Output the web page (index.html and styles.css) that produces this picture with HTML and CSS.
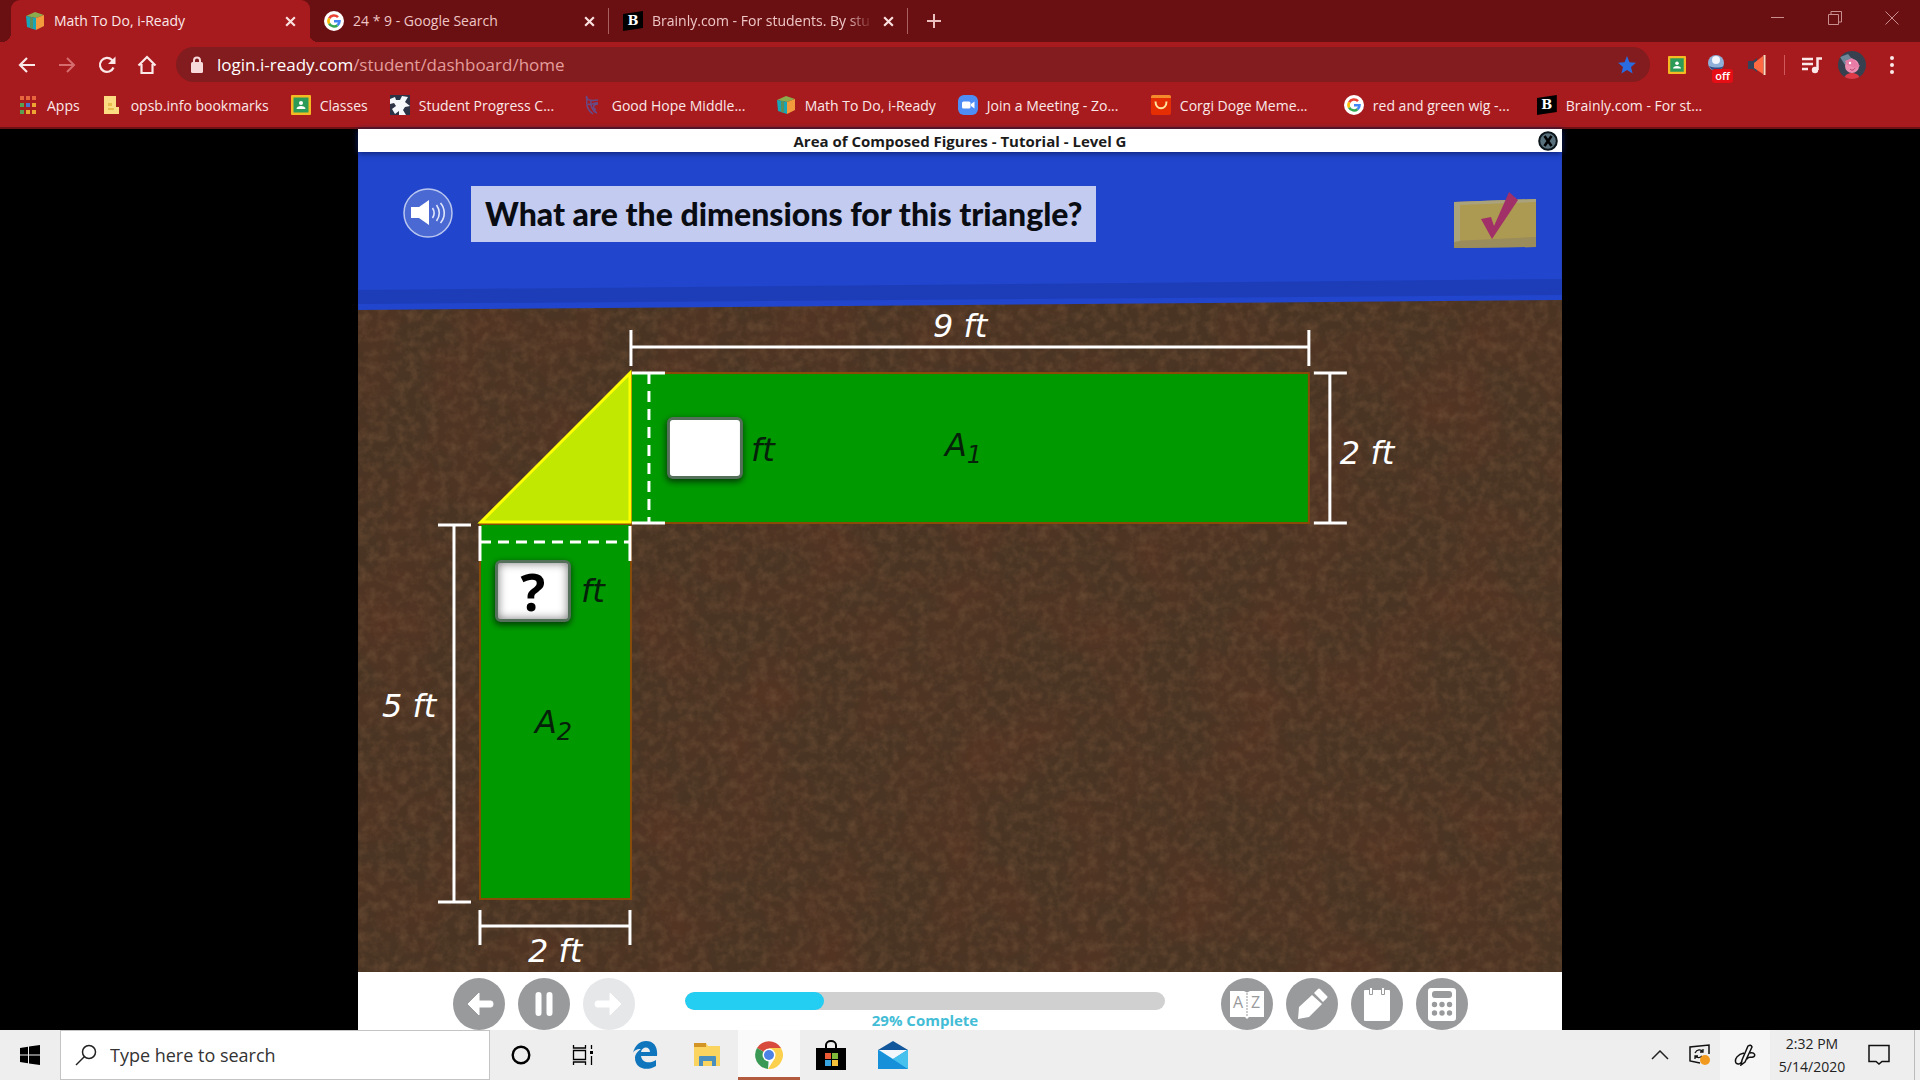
FILE: index.html
```html
<!DOCTYPE html>
<html lang="en">
<head>
<meta charset="utf-8">
<title>Math To Do, i-Ready</title>
<link rel="stylesheet" href="styles.css">
</head>
<body>
<svg class="defs" aria-hidden="true">
  <symbol id="cube" viewBox="0 0 20 20"><path d="M1 5 10 1l9 3-8 3z" fill="#8bab4c"/><path d="M1 5l10 2v12L2 16z" fill="#18a5b5"/><path d="M11 7l8-3v11l-8 4z" fill="#f39b3c"/><path d="M5 6l3 .6v11L5 16.900z" fill="#5b8f5c"/></symbol>
  <symbol id="google" viewBox="0 0 20 20"><circle cx="10" cy="10" r="10" fill="#fff"/><g fill="none" stroke-width="2.600"><path d="M5.200 7.400A5.500 5.500 0 0 1 14 6.200" stroke="#ea4335"/><path d="M5.200 7.300a5.500 5.500 0 0 0 0 5.400" stroke="#fbbc05"/><path d="M5.200 12.600A5.500 5.500 0 0 0 13.500 14.200" stroke="#34a853"/><path d="M10 10.200h5.500a5.500 5.500 0 0 1-2 4" stroke="#4285f4"/></g></symbol>
  <symbol id="close" viewBox="0 0 12 12"><path d="M2 2l8 8M10 2l-8 8" stroke="currentColor" stroke-width="2" fill="none"/></symbol>
  <symbol id="classroom" viewBox="0 0 20 20"><rect width="20" height="20" rx="1" fill="#f5b921"/><rect x="2.500" y="2.500" width="15" height="15" fill="#2c9b58"/><circle cx="10" cy="8" r="2" fill="#fff"/><path d="M5.500 14c0-4 9-4 9 0z" fill="#fff"/></symbol>
</svg>

<header class="browser">
  <div class="tabs">
    <a class="tab tab-active" href="#"><svg class="fav"><use href="#cube"/></svg><span class="tab-title">Math To Do, i-Ready</span><svg class="x"><use href="#close"/></svg></a>
    <a class="tab" href="#"><svg class="fav"><use href="#google"/></svg><span class="tab-title">24 * 9 - Google Search</span><svg class="x"><use href="#close"/></svg></a>
    <a class="tab" href="#"><span class="fav brainly">B</span><span class="tab-title tab-fade">Brainly.com - For students. By stu</span><svg class="x"><use href="#close"/></svg></a>
    <button class="new-tab" aria-label="New tab"><svg width="16" height="16" viewBox="0 0 16 16"><path d="M8 1v14M1 8h14" stroke="currentColor" stroke-width="2"/></svg></button>
    <div class="window-controls">
      <button aria-label="Minimize"><svg width="14" height="14" viewBox="0 0 14 14"><path d="M0 6.500h13" stroke="currentColor"/></svg></button>
      <button aria-label="Restore"><svg width="14" height="14" viewBox="0 0 14 14"><path d="M.5 3.500h10v10H.5zM3 3V.5h10.500V11H11" fill="none" stroke="currentColor"/></svg></button>
      <button aria-label="Close window"><svg width="14" height="14" viewBox="0 0 14 14"><path d="M.5.5l13 13M13.500.5l-13 13" stroke="currentColor"/></svg></button>
    </div>
  </div>
  <div class="toolbar">
    <button aria-label="Back"><svg width="20" height="20" viewBox="0 0 20 20"><path d="M18 10H3M10 3l-7 7 7 7" fill="none" stroke="currentColor" stroke-width="2.200"/></svg></button>
    <button class="dim" aria-label="Forward"><svg width="20" height="20" viewBox="0 0 20 20"><path d="M2 10h15M10 3l7 7-7 7" fill="none" stroke="currentColor" stroke-width="2"/></svg></button>
    <button aria-label="Reload"><svg width="20" height="20" viewBox="0 0 20 20"><path d="M16.500 12.500a7 7 0 1 1-1.500-7.500l1 1" fill="none" stroke="currentColor" stroke-width="2.200"/><path d="M18.500 1.500v7.500H11z" fill="currentColor"/></svg></button>
    <button aria-label="Home"><svg width="20" height="20" viewBox="0 0 20 20"><path d="M1.500 10.500 10 2l8.500 8.500M4.500 9v9h11V9" fill="none" stroke="currentColor" stroke-width="2.200"/></svg></button>
    <div class="address">
      <svg width="14" height="18" viewBox="0 0 14 18"><rect x="1" y="6" width="12" height="11" rx="1.500" fill="#f7dada"/><path d="M4 7V4.500a3 3 0 0 1 6 0V7" fill="none" stroke="#f7dada" stroke-width="2"/></svg>
      <a class="url" href="#"><span class="host">login.i-ready.com</span>/student/dashboard/home</a>
      <svg width="18" height="18" viewBox="0 0 18 18"><path d="M9 0l2.500 6.200 6.500.6-5 4.300 1.600 6.500L9 14l-5.600 3.600L5 11.100 0 6.800l6.500-.6z" fill="#2a6be0"/></svg>
    </div>
    <button aria-label="Classroom"><svg width="20" height="18"><use href="#classroom"/></svg></button>
    <button class="ext" aria-label="Extension off"><svg width="22" height="22" viewBox="0 0 22 22"><circle cx="10" cy="9" r="8" fill="#8fb0d8"/><path d="M3 12c3 6 11 6 15 0-4 2-10 2-15 0z" fill="#334b80"/><circle cx="10" cy="6" r="4" fill="#f3f6fb"/></svg><span class="badge">off</span></button>
    <button aria-label="Volume"><svg width="20" height="22" viewBox="0 0 20 22"><path d="M1 7h5l4-3v14l-4-3H1z" fill="#34435a"/><path d="M7 9l9-7v18l-9-6z" fill="#ff6a42"/><path d="M17.500 1v20" stroke="#f6e0c4" stroke-width="2"/></svg></button>
    <span class="divider"></span>
    <button aria-label="Media"><svg width="20" height="18" viewBox="0 0 20 18"><path d="M0 3h11M0 8h11M0 13h6M15.500 14V2.500H20" fill="none" stroke="currentColor" stroke-width="2.500"/><circle cx="13" cy="14" r="3.200" fill="currentColor"/></svg></button>
    <button aria-label="Profile"><svg width="28" height="28" viewBox="0 0 28 28"><defs><clipPath id="avatar"><circle cx="14" cy="14" r="14"/></clipPath></defs><g clip-path="url(#avatar)"><path d="M0 0h28v28H0z" fill="#37404f"/><path d="M2 6l8-3 4 5-7 6z" fill="#6f8798"/><circle cx="14" cy="15" r="7" fill="#ee8fb2"/><path d="M7 10l7-3 8 8-4 2-9-3z" fill="#e87ca6"/><path d="M6 28c1-8 15-8 16 0z" fill="#df3946"/><circle cx="12" cy="12" r="1.200" fill="#fff"/><path d="M12 18c2 2 4 1 5-1" stroke="#b43b6c" fill="none"/></g></svg></button>
    <button aria-label="Menu"><svg width="6" height="20" viewBox="0 0 6 20"><g fill="currentColor"><circle cx="3" cy="3" r="2"/><circle cx="3" cy="10" r="2"/><circle cx="3" cy="17" r="2"/></g></svg></button>
  </div>
  <nav class="bookmarks">
    <a href="#"><svg class="fav" viewBox="0 0 20 20"><g fill="#e8663e"><path d="M2 1h4v4H2zM8 1h4v4H8zM14 1h4v4h-4z"/></g><path d="M2 8h4v4H2z" fill="#5a9f52"/><path d="M8 8h4v4H8z" fill="#516fd0"/><path d="M14 8h4v4h-4zM8 15h4v4H8zM14 15h4v4h-4z" fill="#eea432"/><path d="M2 15h4v4H2z" fill="#5a9f52"/></svg><span>Apps</span></a>
    <a href="#"><svg class="fav" viewBox="0 0 20 20"><path d="M2 1h12v11h3v7H2z" fill="#fbdc82"/><path d="M6 8h4v3H6zM6 13h6v2H6z" fill="#e7bd50"/></svg><span>opsb.info bookmarks</span></a>
    <a href="#"><svg class="fav"><use href="#classroom"/></svg><span>Classes</span></a>
    <a class="cut" href="#"><svg class="fav" viewBox="0 0 20 20"><path d="M0 0h20v20H0z" fill="#2b3447"/><path d="M0 4l5-2 1 3 4 0 2-4 6 1-3 5 5 4-5 1-2 3 3 5H9l0-4-4 3-3-5 4-3-2-3-4 1z" fill="#f5f8fa"/></svg><span>Student Progress C...</span></a>
    <a class="cut" href="#"><svg class="fav" viewBox="0 0 20 20"><path d="M4 1c-3 4 4 5 11 4M4 2c-1 8 0 13 6 17M5 9c4 2 6-2 10-1M8 5c-1 5 1 11 6 13M15 9c-5 0-6 4-2 6" fill="none" stroke="#684a86" stroke-width="1.500"/></svg><span>Good Hope Middle...</span></a>
    <a href="#"><svg class="fav"><use href="#cube"/></svg><span>Math To Do, i-Ready</span></a>
    <a class="cut" href="#"><svg class="fav" viewBox="0 0 20 20"><rect width="20" height="20" rx="6" fill="#4e8df5"/><rect x="4" y="6.500" width="8.500" height="7" rx="1.500" fill="#fff"/><path d="M13 9l3.500-2.500v7L13 11z" fill="#fff"/></svg><span>Join a Meeting - Zo...</span></a>
    <a class="cut" href="#"><svg class="fav" viewBox="0 0 20 20"><rect width="20" height="20" rx="2" fill="#e62e04"/><path d="M0 3V2q0-2 2-2h16q2 0 2 2v1z" fill="#f58a2c"/><path d="M4.500 6.500c0 9 11 9 11 0" fill="none" stroke="#ffe7a0" stroke-width="2"/></svg><span>Corgi Doge Meme...</span></a>
    <a class="cut" href="#"><svg class="fav"><use href="#google"/></svg><span>red and green wig -...</span></a>
    <a class="cut" href="#"><span class="fav brainly">B</span><span>Brainly.com - For st...</span></a>
  </nav>
</header>

<main class="page">
  <section class="player">
    <div class="lesson-bar"><h1>Area of Composed Figures - Tutorial - Level G</h1>
      <button class="lesson-close" aria-label="Close lesson"><svg width="20" height="20" viewBox="0 0 20 20"><circle cx="10" cy="10" r="8.800" fill="#57707c" stroke="#0b1419" stroke-width="2"/><path d="M6.500 5l7 10M13.500 5l-7 10" stroke="#000" stroke-width="2.600"/></svg></button>
    </div>
    <div class="stage">
      <svg class="soil" aria-hidden="true">
        <filter id="grain" x="0" y="0" width="100%" height="100%" color-interpolation-filters="sRGB"><feTurbulence type="fractalNoise" baseFrequency="0.100" numOctaves="5" seed="8"/><feColorMatrix values="0 0 0 0 .44  0 0 0 0 .32  0 0 0 0 .22  1.200 0 0 0 -.48"/></filter>
        <filter id="patch" x="0" y="0" width="100%" height="100%" color-interpolation-filters="sRGB"><feTurbulence type="fractalNoise" baseFrequency="0.014" numOctaves="3" seed="3"/><feColorMatrix values="0 0 0 0 .38  0 0 0 0 .2  0 0 0 0 .14  1 0 0 0 -.38"/></filter>
        <rect width="100%" height="100%" filter="url(#patch)"/><rect width="100%" height="100%" filter="url(#grain)"/>
      </svg>
      <div class="question">
        <button class="speaker" aria-label="Read aloud"><svg width="50" height="50" viewBox="0 0 50 50"><circle cx="25" cy="25" r="24" fill="#4b69d2" stroke="#b9c6f0" stroke-width="1.500"/><path d="M8 19h8l10-7v25l-10-7H8z" fill="#fff"/><path d="M29.500 20c2 3 2 7 0 10M33.500 17c3.500 5 3.500 11 0 16M37.500 15c5 6 5 14 0 20" fill="none" stroke="#dfe6fb" stroke-width="1.600"/></svg></button>
        <h2>What are the dimensions for this triangle?</h2>
        <button class="done" aria-label="Done"><svg width="84" height="60" viewBox="0 0 84 60"><path d="M1 10 83 7v48L1 56z" fill="#ac9952"/><path d="M1 49l82-4v10L1 56z" fill="#9a8c5b"/><path d="M1 10 83 7v3L7 13v36l-6 1z" fill="#aaa27a"/><path d="M28 27l10-2 3 9L56 0l9 8-26 39z" fill="#a13068"/></svg></button>
      </div>
      <svg class="figure" viewBox="0 0 1204 662" role="group" aria-label="Composed figure">
        <g fill="#009a00" stroke="#8a4b08" stroke-width="2"><rect x="273" y="63" width="678" height="150"/><rect x="122" y="214" width="151" height="375"/></g>
        <path d="M123 212 272 63v149z" fill="#c1e800" stroke="#ffff00" stroke-width="3"/>
        <g fill="none" stroke="#fff" stroke-width="3"><path d="M273 37h678M273 20v36M951 20v36M972 63v150M956 63h33M956 213h33M96 215v377M80 215h33M80 592h33M122 616h150M122 600v35M272 600v35M274 63h33M274 213h33M122 216v35M272 216v35"/><path d="M291 63v150M122 232h150" stroke-dasharray="11 7"/></g>
        <g class="labels"><text x="575" y="27">9 ft</text><text x="982" y="154">2 ft</text><text x="24" y="407">5 ft</text><text x="170" y="652">2 ft</text></g>
        <g class="labels ink"><text x="393" y="151">ft</text><text x="223" y="292">ft</text><text x="587" y="146">A<tspan class="sub" dy="7">1</tspan></text><text x="177" y="423">A<tspan class="sub" dy="7">2</tspan></text></g>
        <foreignObject x="300" y="98" width="96" height="80"><input class="answer" type="text" aria-label="Height in feet"></foreignObject>
        <foreignObject x="128" y="241" width="96" height="80"><button class="answer unknown" aria-label="Base in feet">?</button></foreignObject>
      </svg>
    </div>
    <footer class="controls">
      <button aria-label="Previous"><svg viewBox="0 0 52 52"><circle cx="26" cy="26" r="26" fill="#999a9c"/><path d="M15 26 26 15v8h12q2 0 2 3t-2 3H26v8z" fill="#fff" stroke="#fff" stroke-linejoin="round"/></svg></button>
      <button aria-label="Pause"><svg viewBox="0 0 52 52"><circle cx="26" cy="26" r="26" fill="#999a9c"/><path d="M20.500 17v18M31.500 17v18" stroke="#fff" stroke-width="6" stroke-linecap="round"/></svg></button>
      <button aria-label="Next" disabled><svg viewBox="0 0 52 52"><circle cx="26" cy="26" r="26" fill="#e6e7e9"/><path d="M38 26 27 15v8H14q-2 0-2 3t2 3h13v8z" fill="#fff" stroke="#fff" stroke-linejoin="round"/></svg></button>
      <div class="meter"><progress id="lesson-progress" value="29" max="100"></progress><label for="lesson-progress">29% Complete</label></div>
      <button aria-label="Glossary"><svg viewBox="0 0 52 52"><circle cx="26" cy="26" r="26" fill="#999a9c"/><path d="M9 13h14l3 1.500 3-1.500h14v26H28l-2 2-2-2H9z" fill="#fff"/><path d="M26 15v24" stroke="#999a9c" stroke-dasharray="2 1"/><g font-family="Open Sans, sans-serif" font-size="16" fill="#999a9c"><text x="12" y="30">A</text><text x="30" y="30">Z</text></g></svg></button>
      <button aria-label="Pencil"><svg viewBox="0 0 52 52"><circle cx="26" cy="26" r="26" fill="#999a9c"/><path d="M12 41l1-12 13-12 10 9-13 13zM28 15l4-4q1-1 2 0l7 7q1 1 0 2l-4 4z" fill="#fff"/></svg></button>
      <button aria-label="Notepad"><svg viewBox="0 0 52 52"><circle cx="26" cy="26" r="26" fill="#999a9c"/><rect x="13" y="12" width="26" height="31" rx="1" fill="#fff"/><path d="M18.500 9.500h3v7h-3zM30.500 9.500h3v7h-3z" fill="#fff" stroke="#999a9c"/></svg></button>
      <button aria-label="Calculator"><svg viewBox="0 0 52 52"><circle cx="26" cy="26" r="26" fill="#999a9c"/><rect x="12" y="10" width="28" height="33" rx="3" fill="#fff"/><rect x="16" y="13" width="20" height="7" rx="3" fill="#999a9c"/><g fill="#999a9c"><circle cx="18.500" cy="26.500" r="2.700"/><circle cx="26" cy="26.500" r="2.700"/><circle cx="33.500" cy="26.500" r="2.700"/><circle cx="18.500" cy="35" r="2.700"/><circle cx="26" cy="35" r="2.700"/><circle cx="33.500" cy="35" r="2.700"/></g></svg></button>
    </footer>
  </section>
</main>

<footer class="taskbar">
  <button class="start" aria-label="Start"><svg width="20" height="20" viewBox="0 0 20 20"><path d="M0 3l8-1.200v7.700H0zM9 1.600 20 0v9.500H9zM0 10.500h8v7.700L0 17zM9 10.500h11V20L9 18.400z"/></svg></button>
  <label class="search"><svg width="22" height="22" viewBox="0 0 22 22"><circle cx="14" cy="8" r="6.500" fill="none" stroke="#222" stroke-width="1.500"/><path d="M9.500 12.500 1 21" stroke="#222" stroke-width="1.500"/></svg><input type="text" placeholder="Type here to search" aria-label="Search"></label>
  <button aria-label="Cortana"><svg width="20" height="20" viewBox="0 0 20 20"><circle cx="10" cy="10" r="8.300" fill="none" stroke="#000" stroke-width="2.400"/></svg></button>
  <button aria-label="Task view"><svg width="22" height="22" viewBox="0 0 22 22"><path d="M1.500 1v3h12V1M1.500 6.500h12v9h-12zM1.500 21v-3h12v3M19.500 1v4M19.500 12v9" fill="none" stroke="#000" stroke-width="1.300"/><path d="M18 7h3v3h-3z"/></svg></button>
  <button aria-label="Edge"><svg width="26" height="28" viewBox="0 0 26 28"><path d="M1 12C3 4 8 0 14 0c8 0 12 6 11 15H9c1 7 9 8 15 4v6C14 31 3 27 3 17c0-4 3-7 6-9-5 0-7 2-8 4zM9 11h9c0-6-8-6-9 0z" fill="#0f75bd"/></svg></button>
  <button aria-label="File Explorer"><svg width="28" height="24" viewBox="0 0 28 24"><path d="M1 0h12l2 3h12v20H1z" fill="#fad45e"/><path d="M1 0h12v4H1z" fill="#d29525"/><path d="M6 23V14q0-1 1-1h15q1 0 1 1v9h-4v-5h-9v5z" fill="#4a8fbd"/></svg></button>
  <button class="running" aria-label="Chrome"><svg width="28" height="28" viewBox="0 0 28 28"><path d="M14 14 2 7a14 14 0 0 1 24 0z" fill="#d84a3c"/><path d="M14 14 2 7a14 14 0 0 0 11 21z" fill="#3a9a55"/><path d="M14 7h12a14 14 0 0 1-13 21l7-11z" fill="#fbd04c"/><circle cx="14" cy="14" r="6.500" fill="#fff"/><circle cx="14" cy="14" r="5" fill="#4c82e6"/></svg></button>
  <button aria-label="Store"><svg width="30" height="30" viewBox="0 0 30 30"><path d="M0 8h30v22H0z"/><path d="M10 9V5a5 4 0 0 1 10 0v4" fill="none" stroke="#000" stroke-width="2"/><path d="M9 13h6v6H9z" fill="#ea5a35"/><path d="M16 13h6v6h-6z" fill="#80b83a"/><path d="M9 20h6v6H9z" fill="#38a5e0"/><path d="M16 20h6v6h-6z" fill="#f6c13a"/></svg></button>
  <button aria-label="Mail"><svg width="30" height="28" viewBox="0 0 30 28"><path d="M0 9 15 0l15 9z" fill="#12569c"/><path d="M0 9h30v19H0z" fill="#2ca8e8"/><path d="M1 9h28L15 18z" fill="#f2f7fb"/><path d="M0 9l30 19H0z" fill="#1690d8"/><path d="M15 18 30 9v19z" fill="#46c1ee"/></svg></button>
  <div class="tray">
    <button aria-label="Show hidden icons"><svg width="18" height="10" viewBox="0 0 18 10"><path d="M1 9l8-8 8 8" fill="none" stroke="#222" stroke-width="1.500"/></svg></button>
    <button aria-label="Updates"><svg width="22" height="22" viewBox="0 0 22 22"><path d="M20 10V1L1 3v14l10 2" fill="none" stroke="#111" stroke-width="1.500"/><path d="M6 9c2-4 6-4 8-1M14 5v3h-3M13 12c-2 2-5 2-7 0M6 15v-3h3" fill="none" stroke="#111" stroke-width="1.300"/><circle cx="16" cy="16" r="5" fill="#f29a1f"/></svg></button>
    <button class="pen" aria-label="Windows Ink"><svg width="22" height="22" viewBox="0 0 22 22"><path d="M8 16 14 2q3-2 4 1L11 18l-4 3zM10 9C4 10 0 15 2 19c2 2 5 1 6-2M16 9c5-1 6 3 3 4-3 1-4-1-6 2" fill="none" stroke="#111" stroke-width="1.500"/></svg></button>
    <div class="clock"><span>2:32 PM</span><span>5/14/2020</span></div>
    <button class="notices" aria-label="Notifications"><svg width="22" height="22" viewBox="0 0 22 22"><path d="M1 1.500h20v16h-7L11 20l-3-2.500H1z" fill="none" stroke="#111" stroke-width="1.500"/></svg></button>
    <span class="peek"></span>
  </div>
</footer>
</body>
</html>
```
FILE: styles.css
```css
* { box-sizing: border-box; }
body { margin: 0; min-height: 100vh; display: flex; flex-direction: column; background: #000; font-family: "Open Sans", "Noto Sans", sans-serif; font-size: 14px; }
button { display: flex; align-items: center; justify-content: center; padding: 0; border: 0; background: none; color: inherit; font: inherit; flex: none; }
a { color: inherit; text-decoration: none; }
svg { flex: none; }
.defs { display: none; }
.fav { flex: none; width: 20px; height: 20px; }
.brainly { background: #000; clip-path: polygon(0 15%, 100% 0, 100% 85%, 0 100%); color: #fff; font: 700 13px/20px "DejaVu Serif", serif; text-align: center; }

/* Browser frame */
.browser { height: 129px; background: #a71b1e; border-bottom: 2px solid #6d1214; color: #fbe8e8; }
.tabs { display: flex; height: 42px; padding-left: 11px; background: #6b1012; }
.tab { position: relative; display: flex; align-items: center; gap: 9px; width: 299px; padding: 0 12px 0 14px; line-height: 20px; color: #efc6c6; border-right: 1px solid transparent; }
.tab:not(.tab-active) { border-image: linear-gradient(transparent 20%, #a86061 20% 80%, transparent 80%) 1; }
.tab-active { background: #a71b1e; color: #fbe8e8; border-radius: 9px 9px 0 0; }
.tab-active::before, .tab-active::after { content: ""; position: absolute; bottom: 0; width: 9px; height: 9px; }
.tab-active::before { right: 100%; background: radial-gradient(circle at 0 0, transparent 9px, #a71b1e 9px); }
.tab-active::after { left: 100%; background: radial-gradient(circle at 100% 0, transparent 9px, #a71b1e 9px); }
.tab-title { flex: 1; min-width: 0; white-space: nowrap; }
.tab-fade { -webkit-mask-image: linear-gradient(90deg, #000 88%, transparent); mask-image: linear-gradient(90deg, #000 88%, transparent); }
.x { width: 13px; height: 13px; color: #fbe0e0; }
.new-tab { width: 52px; color: #edc0c0; }
.window-controls { display: flex; margin-left: auto; height: 36px; color: #c98e8e; }
.window-controls button { width: 57px; }
.toolbar { display: flex; align-items: center; height: 45px; padding: 0 8px 0 7px; }
.toolbar button { width: 40px; height: 36px; }
.toolbar .dim { color: #d66c6e; }
.address { display: flex; flex: 1; align-items: center; gap: 13px; height: 35px; margin: 0 7px 0 9px; padding: 0 14px; border-radius: 18px; background: #821c1e; }
.url { flex: 1; font-size: 17px; line-height: 24px; color: #e59c9c; }
.host { color: #fff; }
.ext { position: relative; }
.badge { position: absolute; right: 4px; bottom: 0; padding: 0 3px; border-radius: 3px; background: #e60d14; color: #fff; font-size: 11px; line-height: 14px; font-weight: 600; }
.divider { width: 1px; height: 20px; margin: 0 7px; background: #d0585b; }
.bookmarks { display: flex; align-items: center; gap: 22px; height: 36px; padding-left: 18px; white-space: nowrap; }
.bookmarks a { display: flex; align-items: center; gap: 9px; }
.bookmarks .cut { width: 171px; }

/* Lesson player */
.page { flex: 1; display: flex; justify-content: center; background: #000; }
.player { display: flex; flex-direction: column; width: 62.7%; background: #fff; }
.lesson-bar { position: relative; z-index: 1; display: flex; align-items: center; height: 23px; padding: 0 4px; background: #fff; box-shadow: 0 1px 6px #0a1f6a; }
.lesson-bar h1 { flex: 1; margin: 0 0 0 20px; text-align: center; font-size: 15px; line-height: 20px; font-weight: 700; color: #1b1b1b; }
.stage { position: relative; flex: 1; display: flex; flex-direction: column; background: #493423; }
.soil { position: absolute; inset: 0; width: 100%; height: 100%; }
.question { position: relative; display: flex; align-items: flex-start; height: 158px; padding: 34px 25px 0 45px; background: #2145cc; clip-path: polygon(0 0, 100% 0, 100% 148px, 0 158px); }
.question::before { content: ""; position: absolute; inset: 0; background: #1d3db8; clip-path: polygon(0 138px, 100% 127px, 100% 143px, 0 152px); }
.speaker { margin: 2px 18px 0 0; }
.question h2 { margin: 0; padding: 0 14px; font-family: Lato, sans-serif; font-size: 32px; font-weight: 900; line-height: 56px; color: #0a0c14; background: #c3ccf0; white-space: nowrap; }
.done { margin-left: auto; margin-top: 6px; }
.figure { position: relative; display: block; flex: 1; width: 100%; min-height: 0; }
.labels { font-family: "DejaVu Sans", sans-serif; font-style: oblique; font-size: 32px; fill: #fff; }
.ink { fill: #06210a; }
.sub { font-size: 24px; }
.answer { display: block; width: 76px; height: 62px; margin: 9px; border: 3px solid #55705a; border-radius: 6px; background: #fff; box-shadow: 0 2px 6px #043d07; text-align: center; font-size: 32px; }
.unknown { box-shadow: 0 2px 6px #043d07, inset 0 0 10px #777; font-size: 52px; line-height: 52px; font-weight: 700; color: #000; }
.controls { display: flex; gap: 13px; height: 58px; padding: 6px 94px 0 95px; background: #fff; }
.controls button, .controls button svg { width: 52px; height: 52px; }
.meter { flex: 1; display: flex; flex-direction: column; align-items: center; margin: 0 43px 0 37px; padding-top: 14px; }
.meter progress { appearance: none; display: block; width: 100%; height: 18px; border: 0; border-radius: 9px; overflow: hidden; background: #d0d0d0; }
.meter progress::-webkit-progress-bar { background: #d0d0d0; }
.meter progress::-webkit-progress-value { background: #24cdf2; border-radius: 9px; }
.meter label { font-size: 15px; line-height: 20px; font-weight: 700; color: #43bdd6; }

/* Taskbar */
.taskbar { display: flex; height: 50px; background: #eee; color: #222; }
.taskbar button { width: 62px; }
.taskbar .start { width: 60px; }
.search { display: flex; align-items: center; gap: 13px; width: 430px; padding-left: 14px; border: 1px solid #c4c4c4; background: #fff; }
.search input { flex: 1; min-width: 0; border: 0; padding: 0; background: none; font: inherit; font-size: 18px; }
.search input::placeholder { color: #333; opacity: 1; }
.taskbar .running { background: #fafafa; border-bottom: 3px solid #b35b3e; padding-top: 3px; }
.tray { display: flex; margin-left: auto; }
.taskbar .tray button { width: 40px; }
.taskbar .tray .pen { width: 50px; background: #f6f6f6; }
.clock { display: flex; flex-direction: column; justify-content: center; width: 84px; text-align: center; line-height: 23px; }
.taskbar .tray .notices { width: 50px; }
.peek { width: 6px; margin-left: 10px; border-left: 1px solid #bbb; }
```
